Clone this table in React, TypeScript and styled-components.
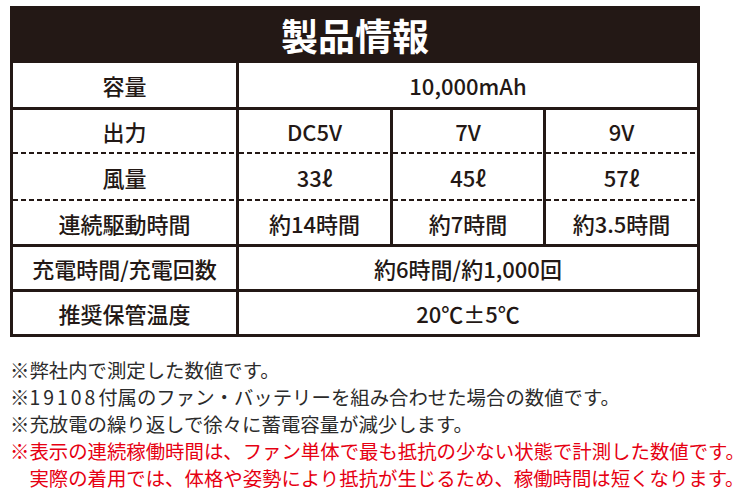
import styled, { createGlobalStyle } from "styled-components";

type Line = "solid" | "dashed" | "none";

type SpecRow = {
  label: string;
  values: string[];
  line: Line;
  height: number;
};

const specRows: SpecRow[] = [
  { label: "容量", values: ["10,000mAh"], line: "solid", height: 44 },
  { label: "出力", values: ["DC5V", "7V", "9V"], line: "dashed", height: 44 },
  { label: "風量", values: ["33ℓ", "45ℓ", "57ℓ"], line: "dashed", height: 47 },
  { label: "連続駆動時間", values: ["約14時間", "約7時間", "約3.5時間"], line: "solid", height: 43 },
  { label: "充電時間/充電回数", values: ["約6時間/約1,000回"], line: "solid", height: 42 },
  { label: "推奨保管温度", values: ["20℃±5℃"], line: "none", height: 42 },
];

const INK = "#231815";

function App() {
  return (
    <Page>
      <GlobalStyle />
      <SpecTable>
        <TitleBar>製品情報</TitleBar>
        <Body>
          {specRows.map((row) => (
            <Row key={row.label} $line={row.line}>
              <Cell $label $dashed={row.line === "dashed"} $h={row.height}>
                {row.label}
              </Cell>
              {row.values.map((v) => (
                <Cell
                  key={v}
                  $span={row.values.length === 1 ? 3 : 1}
                  $dashed={row.line === "dashed"}
                  $h={row.height}
                >
                  {v}
                </Cell>
              ))}
            </Row>
          ))}
        </Body>
      </SpecTable>
      <Notes>
        <Note>※弊社内で測定した数値です。</Note>
        <Note>
          ※<Num>19108</Num>付属のファン・バッテリーを組み合わせた場合の数値です。
        </Note>
        <Note>※充放電の繰り返しで徐々に蓄電容量が減少します。</Note>
        <Note $warn>
          ※表示の連続稼働時間は、ファン単体で最も抵抗の少ない状態で計測した数値です。
        </Note>
        <Note $warn $indent>
          実際の着用では、体格や姿勢により抵抗が生じるため、稼働時間は短くなります。
        </Note>
      </Notes>
    </Page>
  );
}

const GlobalStyle = createGlobalStyle`
  html, body {
    margin: 0;
    background: #fff;
    overflow: hidden;
  }
  body {
    font-family: "Noto Sans CJK JP", "Noto Sans", sans-serif;
  }
`;

const Page = styled.div`
  padding: 6px 0 0 10px;
`;

const SpecTable = styled.div`
  width: 690px;
`;

const TitleBar = styled.div`
  height: 57px;
  background: ${INK};
  color: #fff;
  display: flex;
  align-items: center;
  justify-content: center;
  font-size: 37px;
  font-weight: 700;
  line-height: 1;
  padding-top: 2px;
  box-sizing: border-box;
`;

const Body = styled.div`
  border: 3px solid ${INK};
  border-top: none;
`;

const Row = styled.div<{ $line: Line }>`
  display: grid;
  grid-template-columns: 223px 154px 153px 1fr;
  border-bottom: ${(p) => (p.$line === "solid" ? `3px solid ${INK}` : "none")};
`;

const Cell = styled.div<{ $label?: boolean; $span?: number; $dashed?: boolean; $h: number }>`
  grid-column: span ${(p) => p.$span ?? 1};
  height: ${(p) => p.$h}px;
  box-sizing: border-box;
  display: flex;
  align-items: center;
  justify-content: center;
  border-left: ${(p) => (p.$label ? "none" : `3px solid ${INK}`)};
  padding-bottom: ${(p) => (p.$dashed ? 2 : 0)}px;
  color: ${INK};
  font-size: 22px;
  font-weight: 500;
  line-height: 1;
  white-space: nowrap;
  background-image: ${(p) =>
    p.$dashed
      ? `repeating-linear-gradient(90deg, ${INK} 0 5px, transparent 5px 8px)`
      : "none"};
  background-size: 100% 2px;
  background-position: left bottom;
  background-repeat: no-repeat;
`;

const Notes = styled.div`
  margin-top: 19px;
  display: flex;
  flex-direction: column;
`;

const Note = styled.div<{ $warn?: boolean; $indent?: boolean }>`
  font-size: 19.4px;
  line-height: 27px;
  white-space: nowrap;
  color: ${(p) => (p.$warn ? "#e60012" : "#2b2b2b")};
  padding-left: ${(p) => (p.$indent ? "1em" : "0")};
`;

const Num = styled.span`
  letter-spacing: 3px;
`;

export default App;
